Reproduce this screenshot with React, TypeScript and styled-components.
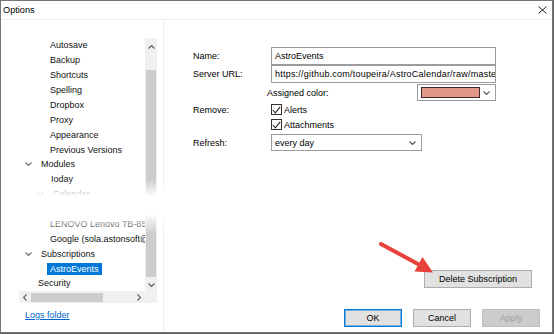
import React from 'react';
import styled, { createGlobalStyle, css } from 'styled-components';

const GlobalStyle = createGlobalStyle`
	* { box-sizing: border-box; }
	html, body {
		margin: 0;
		padding: 0;
		background: #5e5e5e;
	}
	body {
		font-family: "Liberation Sans", Arial, sans-serif;
		font-size: 9px;
		color: #000;
	}
`;

const Window = styled.div`
	position: relative;
	width: 553px;
	height: 333px;
	background: #fff;
	border: 1px solid #767676;
	display: flex;
	flex-direction: column;
	overflow: hidden;
`;

const TitleBar = styled.div`
	height: 19px;
	flex-shrink: 0;
	display: flex;
	align-items: center;
	justify-content: space-between;
	padding: 0 5px 1px 2px;
	border-bottom: 1px solid #f0f0f0;
	font-size: 9.2px;
`;

const Body = styled.div`
	flex: 1;
	display: flex;
	min-height: 0;
`;

const LeftPane = styled.div`
	width: 163px;
	flex-shrink: 0;
	border-right: 1px solid #ececec;
	display: flex;
	flex-direction: column;
	padding: 18px 0 0 18px;
`;

const Tree = styled.div`
	width: 138px;
	height: 265px;
	display: grid;
	grid-template-columns: 1fr 12px;
	grid-template-rows: 1fr 12px;
`;

const TreeItems = styled.div`
	overflow: hidden;
`;

const TreeRow = styled.div<{ $indent: number }>`
	height: 14.875px;
	display: flex;
	align-items: center;
	padding-left: ${(p) => p.$indent}px;
	white-space: nowrap;
	color: #111;
`;

const Toggle = styled.span`
	width: 13px;
	flex-shrink: 0;
	display: flex;
	align-items: center;
`;

const ItemLabel = styled.span<{ $selected?: boolean }>`
	padding: 1px 3px;
	line-height: 10px;
	${(p) =>
		p.$selected &&
		css`
			background: #0078d7;
			color: #fff;
		`}
`;

const ScrollTrack = styled.div<{ $horizontal?: boolean }>`
	background: #f0f0f0;
	display: flex;
	flex-direction: ${(p) => (p.$horizontal ? 'row' : 'column')};
	align-items: center;
	padding-top: ${(p) => (p.$horizontal ? 0 : 3)}px;
`;

const ArrowCell = styled.div`
	width: 12px;
	height: 12px;
	flex-shrink: 0;
	display: flex;
	align-items: center;
	justify-content: center;
`;

const VThumb = styled.div`
	width: 10px;
	height: 207px;
	margin-top: 17px;
	background: #cdcdcd;
`;

const HThumb = styled.div`
	width: 72px;
	height: 9px;
	background: #cdcdcd;
`;

const Spacer = styled.div`
	flex: 1;
`;

const Corner = styled.div`
	background: #f0f0f0;
`;

const LogsLink = styled.a`
	margin: 7px 0 0 6px;
	color: #0066cc;
	text-decoration: underline;
	line-height: 11px;
	cursor: pointer;
`;

const RightPane = styled.div`
	flex: 1;
	display: flex;
	flex-direction: column;
	padding: 27px 12px 5px 29px;
`;

const FieldRow = styled.div<{ $height: number; $gap?: number }>`
	height: ${(p) => p.$height}px;
	margin-top: ${(p) => p.$gap || 0}px;
	display: flex;
	align-items: center;
`;

const Label = styled.span`
	width: 78px;
	flex-shrink: 0;
`;

const fieldBox = css`
	height: 100%;
	border: 1px solid #9c9c9c;
	background: #fff;
	display: flex;
	align-items: center;
	overflow: hidden;
	white-space: nowrap;
`;

const TextBox = styled.div<{ $spacing?: number }>`
	${fieldBox}
	width: 225px;
	padding: 0 3px;
	letter-spacing: ${(p) => p.$spacing || 0}px;
`;

const ColorLine = styled.div`
	width: 229px;
	height: 100%;
	margin-left: -4px;
	display: flex;
	align-items: center;
	justify-content: space-between;
`;

const ColorCombo = styled.div`
	${fieldBox}
	width: 79px;
	padding: 2px;
`;

const Swatch = styled.div<{ $color: string }>`
	width: 59px;
	height: 11px;
	margin-left: 1px;
	background: ${(p) => p.$color};
	border: 1px solid #3e2b27;
`;

const ComboArrow = styled.div`
	flex: 1;
	display: flex;
	justify-content: center;
`;

const Select = styled.div`
	${fieldBox}
	width: 151px;
	padding: 0 5px 0 3px;
	justify-content: space-between;
`;

const CheckLine = styled.label`
	display: flex;
	align-items: center;
	gap: 2px;
`;

const CheckBox = styled.span`
	width: 11px;
	height: 11px;
	border: 1px solid #333;
	display: flex;
	align-items: center;
	justify-content: center;
`;

const DeleteRow = styled.div`
	margin-top: auto;
	display: flex;
	justify-content: flex-end;
	padding-right: 8px;
`;

const ButtonRow = styled.div`
	margin-top: 21px;
	display: flex;
	justify-content: flex-end;
	gap: 11px;
`;

const Button = styled.button<{ $variant?: 'primary' | 'disabled'; $width?: number }>`
	width: ${(p) => p.$width || 58}px;
	height: 18px;
	padding: 0;
	font-family: inherit;
	font-size: 9px;
	color: #000;
	background: #e1e1e1;
	border: 1px solid #adadad;
	${(p) =>
		p.$variant === 'primary' &&
		css`
			border-color: #0078d7;
			box-shadow: inset 0 0 0 1px rgba(0, 120, 215, 0.45);
		`}
	${(p) =>
		p.$variant === 'disabled' &&
		css`
			background: #cccccc;
			border-color: #bfbfbf;
			color: #a0a0a0;
		`}
`;

const FadeBand = styled.div`
	position: absolute;
	left: -1px;
	right: -1px;
	top: 179px;
	height: 54px;
	pointer-events: none;
	background: linear-gradient(
		to bottom,
		rgba(255, 255, 255, 0) 0%,
		rgba(255, 255, 255, 1) 30%,
		rgba(255, 255, 255, 1) 63%,
		rgba(255, 255, 255, 0.45) 82%,
		rgba(255, 255, 255, 0) 100%
	);
`;

const Annotation = styled.svg`
	position: absolute;
	left: 368px;
	top: 234px;
	pointer-events: none;
`;

const Chevron = ({ dir = 'down', color = '#5a5a5a' }: { dir?: 'down' | 'up' | 'left' | 'right'; color?: string }) => {
	const pts = {
		down: '0.5,0.5 3.5,3.5 6.5,0.5',
		up: '0.5,3.5 3.5,0.5 6.5,3.5',
		left: '3.5,0.5 0.5,3.5 3.5,6.5',
		right: '0.5,0.5 3.5,3.5 0.5,6.5',
	}[dir];
	const horizontal = dir === 'left' || dir === 'right';
	return (
		<svg width={horizontal ? 4 : 7} height={horizontal ? 7 : 4}>
			<polyline points={pts} fill="none" stroke={color} strokeWidth="1.1" />
		</svg>
	);
};

const CheckMark = () => (
	<svg width="9" height="8">
		<polyline points="0.8,4 3.3,6.8 8.2,0.8" fill="none" stroke="#222" strokeWidth="1.1" />
	</svg>
);

type Item = { text: string; indent: number; toggle?: boolean; selected?: boolean };

const items: Item[] = [
	{ text: 'Autosave', indent: 28 },
	{ text: 'Backup', indent: 28 },
	{ text: 'Shortcuts', indent: 28 },
	{ text: 'Spelling', indent: 28 },
	{ text: 'Dropbox', indent: 28 },
	{ text: 'Proxy', indent: 28 },
	{ text: 'Appearance', indent: 28 },
	{ text: 'Previous Versions', indent: 28 },
	{ text: 'Modules', indent: 6, toggle: true },
	{ text: 'Ioday', indent: 29 },
	{ text: 'Calendar', indent: 18, toggle: true },
	{ text: 'Local calendar', indent: 28 },
	{ text: 'LENOVO Lenovo TB-8504F', indent: 28 },
	{ text: 'Google (sola.astonsoft@gmail.com)', indent: 28 },
	{ text: 'Subscriptions', indent: 6, toggle: true },
	{ text: 'AstroEvents', indent: 28, selected: true },
	{ text: 'Security', indent: 16 },
];

const App = () => {
	return (
		<>
			<GlobalStyle />
			<Window>
				<TitleBar>
					<span>Options</span>
					<svg width="9" height="8">
						<path d="M0.5 0.5 L8.5 7.5 M8.5 0.5 L0.5 7.5" stroke="#222" strokeWidth="1" />
					</svg>
				</TitleBar>
				<Body>
					<LeftPane>
						<Tree>
							<TreeItems>
								{items.map((item) => (
									<TreeRow key={item.text} $indent={item.indent}>
										{item.toggle && (
											<Toggle>
												<Chevron color="#6a6a6a" />
											</Toggle>
										)}
										<ItemLabel $selected={item.selected}>{item.text}</ItemLabel>
									</TreeRow>
								))}
							</TreeItems>
							<ScrollTrack>
								<ArrowCell>
									<Chevron dir="up" />
								</ArrowCell>
								<VThumb />
								<Spacer />
								<ArrowCell>
									<Chevron dir="down" />
								</ArrowCell>
							</ScrollTrack>
							<ScrollTrack $horizontal>
								<ArrowCell>
									<Chevron dir="left" />
								</ArrowCell>
								<HThumb />
								<Spacer />
								<ArrowCell>
									<Chevron dir="right" />
								</ArrowCell>
							</ScrollTrack>
							<Corner />
						</Tree>
						<LogsLink>Logs folder</LogsLink>
					</LeftPane>

					<RightPane>
						<FieldRow $height={18}>
							<Label>Name:</Label>
							<TextBox>AstroEvents</TextBox>
						</FieldRow>
						<FieldRow $height={18}>
							<Label>Server URL:</Label>
							<TextBox $spacing={0.22}>https://github.com/toupeira/AstroCalendar/raw/maste</TextBox>
						</FieldRow>
						<FieldRow $height={17} $gap={1}>
							<Label />
							<ColorLine>
								<span>Assigned color:</span>
								<ColorCombo>
									<Swatch $color="#e0978a" />
									<ComboArrow>
										<Chevron />
									</ComboArrow>
								</ColorCombo>
							</ColorLine>
						</FieldRow>
						<FieldRow $height={15} $gap={1}>
							<Label>Remove:</Label>
							<CheckLine>
								<CheckBox>
									<CheckMark />
								</CheckBox>
								Alerts
							</CheckLine>
						</FieldRow>
						<FieldRow $height={15}>
							<Label />
							<CheckLine>
								<CheckBox>
									<CheckMark />
								</CheckBox>
								Attachments
							</CheckLine>
						</FieldRow>
						<FieldRow $height={17} $gap={2}>
							<Label>Refresh:</Label>
							<Select>
								<span>every day</span>
								<Chevron />
							</Select>
						</FieldRow>

						<DeleteRow>
							<Button $width={108}>Delete Subscription</Button>
						</DeleteRow>
						<ButtonRow>
							<Button $variant="primary">OK</Button>
							<Button>Cancel</Button>
							<Button $variant="disabled">Apply</Button>
						</ButtonRow>
					</RightPane>
				</Body>

				<FadeBand />

				<Annotation width="72" height="46" viewBox="369 235 72 46">
					<line x1="381" y1="244" x2="418" y2="264" stroke="#e8413b" strokeWidth="4" strokeLinecap="round" />
					<polygon points="433,272.5 414.5,271.5 422.5,257" fill="#e8413b" />
				</Annotation>
			</Window>
		</>
	);
};

export default App;
